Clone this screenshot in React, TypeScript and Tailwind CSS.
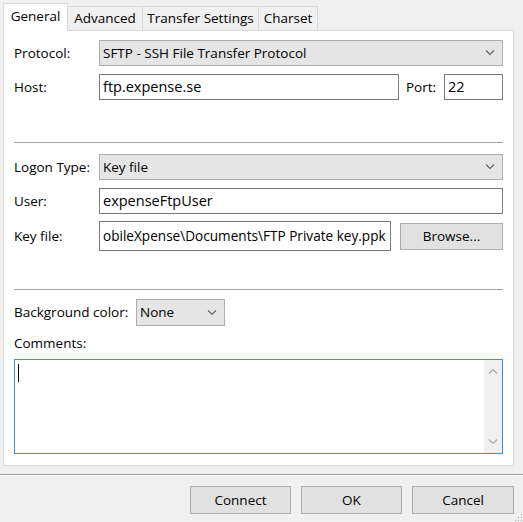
import { useState } from "react";

function Chevron({ up = false, color = "#606060" }: { up?: boolean; color?: string }) {
  return (
    <svg width="10" height="6" viewBox="0 0 10 6" className="shrink-0">
      <path
        d={up ? "M1 5.5 L5 1.5 L9 5.5" : "M1 0.5 L5 4.5 L9 0.5"}
        fill="none"
        stroke={color}
        strokeWidth="1.1"
      />
    </svg>
  );
}

function Select({ value, className }: { value: string; className: string }) {
  return (
    <div
      className={`flex items-center justify-between bg-[#e5e5e5] border border-[#adadad] pl-[3px] pr-[7px] ${className}`}
    >
      <span>{value}</span>
      <Chevron />
    </div>
  );
}

function TextBox({ value, className }: { value: string; className: string }) {
  return (
    <div className={`flex items-center bg-white border border-[#7a7a7a] pl-[3px] overflow-hidden whitespace-nowrap ${className}`}>
      {value}
    </div>
  );
}

function Button({ label, className }: { label: string; className: string }) {
  return (
    <button className={`flex items-center justify-center bg-[#e1e1e1] border border-[#adadad] ${className}`}>
      {label}
    </button>
  );
}

export default function App() {
  const [tab] = useState("General");
  const tabs = [
    { name: "General", w: "w-[65px]" },
    { name: "Advanced", w: "w-[75px]" },
    { name: "Transfer Settings", w: "w-[116px]" },
    { name: "Charset", w: "w-[59px]" },
  ];
  return (
    <div
      className="w-[523px] h-[522px] bg-[#f0f0f0] text-[13.5px] text-black relative overflow-hidden whitespace-nowrap"
      style={{ fontFamily: '"Open Sans", "Noto Sans", sans-serif' }}
    >
      <div className="flex items-end pl-[3px] h-[30px]">
        {tabs.map((t) =>
          t.name === tab ? (
            <div
              key={t.name}
              className={`${t.w} h-[28px] bg-white border border-b-0 border-[#d9d9d9] flex items-center justify-center relative z-10 -mb-px pb-[2px]`}
            >
              {t.name}
            </div>
          ) : (
            <div
              key={t.name}
              className={`${t.w} h-[24px] bg-[#f0f0f0] border border-l-0 border-b-0 border-[#d9d9d9] flex items-center justify-center`}
            >
              {t.name}
            </div>
          )
        )}
      </div>
      <div className="ml-[3px] w-[511px] h-[436px] bg-white border border-[#d9d9d9] px-[10px] pt-[9px] flex flex-col">
        <div className="flex items-center h-[26px]">
          <span className="w-[85px]">Protocol:</span>
          <Select value="SFTP - SSH File Transfer Protocol" className="flex-1 h-[26px]" />
        </div>
        <div className="flex items-center h-[26px] mt-[8px]">
          <span className="w-[85px]">Host:</span>
          <TextBox value="ftp.expense.se" className="w-[300px] h-[26px] text-[14.5px]" />
          <span className="ml-[7px] w-[38px]">Port:</span>
          <TextBox value="22" className="flex-1 h-[26px] text-[14.5px]" />
        </div>
        <div className="h-[2px] border-t border-[#a0a0a0] border-b border-b-white mt-[42px]" />
        <div className="flex items-center h-[26px] mt-[10px]">
          <span className="w-[85px]">Logon Type:</span>
          <Select value="Key file" className="flex-1 h-[26px]" />
        </div>
        <div className="flex items-center h-[26px] mt-[8px]">
          <span className="w-[85px]">User:</span>
          <TextBox value="expenseFtpUser" className="flex-1 h-[26px] text-[14.5px]" />
        </div>
        <div className="flex items-center h-[30px] mt-[7px]">
          <span className="w-[85px]">Key file:</span>
          <TextBox value="obileXpense\Documents\FTP Private key.ppk" className="w-[292px] h-[30px] text-[13.6px]" />
          <Button label="Browse..." className="ml-[9px] flex-1 h-[27px]" />
        </div>
        <div className="h-[2px] border-t border-[#a0a0a0] border-b border-b-white mt-[38px]" />
        <div className="flex items-center h-[27px] mt-[8px]">
          <span className="w-[122px]">Background color:</span>
          <Select value="None" className="w-[89px] h-[27px]" />
        </div>
        <div className="mt-[7px] h-[20px] flex items-center">Comments:</div>
        <div className="mt-[6px] h-[95px] border border-[#3b8fd9] flex">
          <div className="flex-1 pl-[3px] pt-[4px]">
            <div className="w-px h-[18px] bg-black" />
          </div>
          <div className="w-[18px] bg-[#f0f0f0] flex flex-col items-center justify-between py-[8px]">
            <Chevron up color="#a6a6a6" />
            <Chevron color="#a6a6a6" />
          </div>
        </div>
      </div>
      <div className="mt-[8px] h-[2px] border-t border-[#a0a0a0] border-b border-b-white" />
      <div className="flex justify-end gap-[10px] pr-[9px] mt-[10px]">
        <Button label="Connect" className="w-[101px] h-[28px]" />
        <Button label="OK" className="w-[101px] h-[28px]" />
        <Button label="Cancel" className="w-[102px] h-[28px]" />
      </div>
      <svg width="10" height="10" viewBox="0 0 10 10" className="absolute right-0 bottom-0">
        {[
          [8, 2],
          [8, 5],
          [5, 5],
          [8, 8],
          [5, 8],
          [2, 8],
        ].map(([x, y], i) => (
          <rect key={i} x={x} y={y} width="1" height="1" fill="#a0a0a0" />
        ))}
      </svg>
    </div>
  );
}
